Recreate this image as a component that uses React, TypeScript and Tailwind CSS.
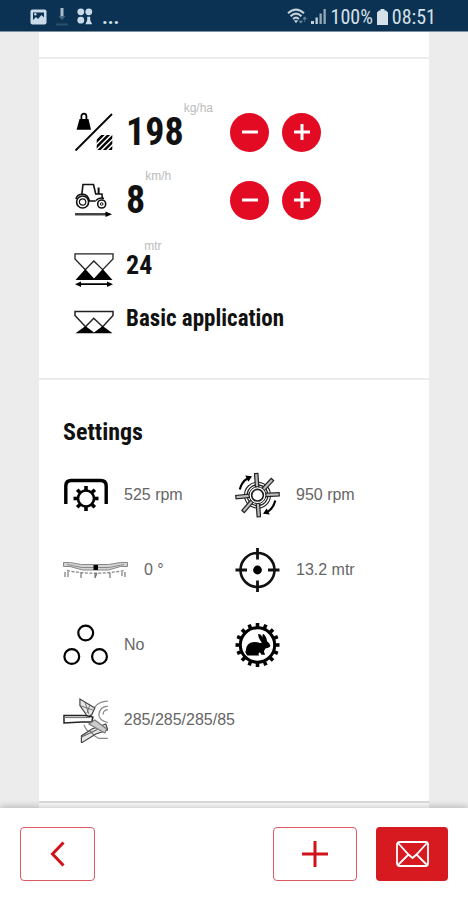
import type { ReactNode } from "react";

const GEAR_TEETH = [0, 45, 90, 135, 180, 225, 270, 315];
const WHEEL_TEETH = Array.from({ length: 16 }, (_, i) => i * 22.5);
const DISC_BLADES = [-4, 43, 87, 176, 221, 264];

const PictureIcon = () => (
  <svg className="h-4 w-[17px]" viewBox="0 0 17 16" aria-hidden="true">
    <rect x="0.5" y="0.5" width="16" height="15" rx="2" fill="#c9dbe8" />
    <path d="M3 3.5h11v5l-2.5-2.5-3.5 4-2-2-3 3z" fill="#0b3252" />
    <circle cx="5.3" cy="5.2" r="1.2" fill="#c9dbe8" />
  </svg>
);

const DownloadIcon = () => (
  <svg className="h-[18px] w-3" viewBox="0 0 12 18" aria-hidden="true">
    <path d="M4.5 0h3v8h-3z" fill="#a9bccb" />
    <path d="M2.5 8h7L6 12z" fill="#496a82" />
    <path d="M0 16.5h12" stroke="#2b4f6b" strokeWidth="2" />
  </svg>
);

const AppsIcon = () => (
  <svg className="h-[17px] w-4" viewBox="0 0 16 17" aria-hidden="true">
    <g fill="#c9dbe8">
      <circle cx="3.8" cy="3.8" r="3.4" />
      <circle cx="11.8" cy="3.8" r="3.4" />
      <circle cx="3.8" cy="12.2" r="3.4" />
      <path d="M10.2 8.8h3v3.4l2 4H8.4l1.8-4z" />
    </g>
  </svg>
);

const WifiIcon = () => (
  <svg className="h-[17px] w-5" viewBox="0 0 20 17" aria-hidden="true">
    <g fill="none" stroke="#c3d0da" strokeWidth="2.1">
      <path d="M1 5.2Q9 -2 17 5.2" />
      <path d="M3.5 8.2Q9 3.2 14.5 8.2" />
      <path d="M6 11Q9 8.3 12 11" />
    </g>
    <path d="M6.8 12.2h4.4L9 15.2z" fill="#c3d0da" />
    <path d="M12 13l1.8 2.2 1.8-2.2zM16 11l1.7-2.2L19.4 11zM17.7 10v4" fill="#5e8799" stroke="#5e8799" strokeWidth="0.7" />
  </svg>
);

const SignalIcon = () => (
  <svg className="h-[17px] w-4" viewBox="0 0 16 17" aria-hidden="true">
    <g fill="#c3d0da">
      <path d="M0 13h3v3H0z" />
      <path d="M4.5 9.5h2.3V16H4.5z" />
      <path d="M8.5 5.5h2.3V16H8.5z" opacity="0.75" />
      <path d="M12.5 1h2.3v15h-2.3z" opacity="0.75" />
    </g>
  </svg>
);

const BatteryIcon = () => (
  <svg className="h-4 w-[11px]" viewBox="0 0 11 16" aria-hidden="true">
    <path d="M3.5 0h4v1.5H9l2 2V16H0V3.5l2-2h1.5z" fill="#d5e0e8" />
  </svg>
);

const RateIcon = () => (
  <svg className="h-[42px] w-10" viewBox="0 0 40 42" aria-hidden="true">
    <path d="M5.5 8h9L17 18.8H2.6z" />
    <path d="M7.4 9V5.2a2.5 2.5 0 0 1 5 0V9" fill="none" stroke="#000" strokeWidth="1.8" />
    <path d="M1.5 39.5L38 3" stroke="#000" strokeWidth="1.8" />
    <clipPath id="hatch">
      <path d="M22.7 24h15.6v15H22.7z" />
    </clipPath>
    <path
      d="M21 32l10-10M21 37.5L37 21.5M21 43l19-19M26.5 43L42 27.5M32 43l10-10"
      stroke="#000"
      strokeWidth="2.4"
      clipPath="url(#hatch)"
    />
  </svg>
);

const TractorIcon = () => (
  <svg className="h-[34px] w-10" viewBox="0 0 40 34" aria-hidden="true">
    <g fill="none" stroke="#111" strokeWidth="1.6">
      <path d="M7.8 11.5L9 1.5h10.5l2.2 9.5h6.2l.6 5" />
      <path d="M24.6 4.5V11" strokeWidth="2" />
      <path d="M2 16q1-5 7-4.8 5 .3 6.4 6.8h6.4" />
      <circle cx="8.6" cy="19" r="6" />
      <circle cx="8.6" cy="19" r="3.2" strokeWidth="1.2" />
      <circle cx="27.7" cy="21" r="4" />
      <circle cx="27.7" cy="21" r="1.3" strokeWidth="1" />
      <path d="M22 17.5q3-3.5 8-2" />
    </g>
    <path d="M1 31.2h33" stroke="#444" strokeWidth="2.4" />
    <path d="M31.5 28.4l6.5 2.8-6.5 2.8z" />
  </svg>
);

const WorkingWidthIcon = () => (
  <svg className="h-[46px] w-10" viewBox="0 -10 40 46" aria-hidden="true">
    <path
      d="M1 7V1.8h38V7L28.7 17.7 19.8 9l-8.5 8.7z"
      fill="none"
      stroke="#222"
      strokeWidth="1.3"
    />
    <path d="M1.5 28l9.8-11L20 26.5 28.7 17 38.5 28z" />
    <path d="M3 32.2h34" stroke="#000" strokeWidth="1.8" />
    <path d="M1 32.2l6-2.8V35zM39 32.2l-6-2.8V35z" />
  </svg>
);

const ApplicationIcon = () => (
  <svg className="h-[30px] w-10" viewBox="0 0 40 30" aria-hidden="true">
    <path
      d="M1 11.5V7.5h38v4L28.7 22.7l-9-8.5-8.2 8.5z"
      fill="none"
      stroke="#222"
      strokeWidth="1.5"
    />
    <path d="M1.5 29.3l10-7.3 8.5 6.4 8.7-6.4 9.8 7.3z" />
  </svg>
);

const PtoIcon = () => (
  <svg className="h-9 w-[45px]" viewBox="0 0 45 36" aria-hidden="true">
    <path d="M2.8 27V9q0-5.5 5.5-5.5h29.4q5.5 0 5.5 5.5v18" fill="none" stroke="#000" strokeWidth="3.4" />
    <circle cx="23" cy="21.5" r="8" fill="none" stroke="#000" strokeWidth="2.6" />
    {GEAR_TEETH.map((angle) => (
      <path key={angle} d="M21.2 9h3.6v4.5h-3.6z" transform={`rotate(${angle} 23 21.5)`} />
    ))}
  </svg>
);

const DiscIcon = () => (
  <svg className="h-[46px] w-[45px]" viewBox="0 0 45 46" aria-hidden="true">
    <g fill="none" stroke="#222">
      <circle cx="22.5" cy="23.2" r="13" strokeWidth="1.1" />
      <circle cx="22.5" cy="23.2" r="10.4" strokeWidth="1.2" />
      {DISC_BLADES.map((angle) => (
        <path
          key={angle}
          d="M21 15V1.5h3.4V15z"
          fill="#bbb"
          strokeWidth="1.2"
          transform={`rotate(${angle} 22.5 23.2)`}
        />
      ))}
      <circle cx="22.5" cy="23.2" r="8.4" fill="#fff" strokeWidth="1" />
      <circle cx="22.5" cy="23.2" r="5.8" strokeWidth="1.7" />
      <path d="M4.8 17.5Q6.5 10 12.5 6.5M40.3 28.5Q38.5 36 33 39.5" stroke="#000" strokeWidth="2.2" />
    </g>
    <path d="M10.2 3.6l6.8.6-3.6 5.6zM34.8 42.6l-6.8-.9 3.7-5.2z" />
  </svg>
);

const BoomIcon = () => (
  <svg className="h-[18px] w-[65px]" viewBox="0 0 65 18" aria-hidden="true">
    <path
      d="M.5 1.5h6l12 2h27l12-2h7v4h-7l-12 3.5h-26L7 5.5H.5z"
      fill="#d4d4d4"
      stroke="#888"
      strokeWidth="1"
    />
    <path d="M4 3.5l15 3h27l15-3" fill="none" stroke="#777" strokeWidth="0.8" />
    <path d="M4 9.5Q32 15 61 9.5" fill="none" stroke="#888" strokeWidth="1.3" strokeDasharray="3 1.5" />
    <path d="M2 11v5M5 11v5M18 12v5M32 12v5M34 12l-2 5M47 12v5M59 11v4M62 11v5" stroke="#777" strokeWidth="1.2" />
    <path d="M30.5 4H35v5h-4.5z" />
  </svg>
);

const TargetIcon = () => (
  <svg className="h-[46px] w-[45px]" viewBox="0 0 45 46" aria-hidden="true">
    <g fill="none" stroke="#111">
      <circle cx="22.5" cy="23" r="17" strokeWidth="2.6" />
      <path d="M22.5 1v11.5M22.5 33.5V45M.5 23H12M33 23h11.5" strokeWidth="2.8" />
    </g>
    <circle cx="22.5" cy="23" r="4.4" />
  </svg>
);

const CirclesIcon = () => (
  <svg className="h-[42px] w-[45px]" viewBox="0 0 45 42" aria-hidden="true">
    <g fill="none" stroke="#000" strokeWidth="2.2">
      <circle cx="22.7" cy="9" r="7.4" />
      <circle cx="8.8" cy="32.5" r="7.4" />
      <circle cx="36.5" cy="32.5" r="7.4" />
    </g>
  </svg>
);

const FastGearIcon = () => (
  <svg className="h-[46px] w-[45px]" viewBox="0 0 45 46" aria-hidden="true">
    <circle cx="22.5" cy="23" r="17.2" fill="none" stroke="#000" strokeWidth="3" />
    {WHEEL_TEETH.map((angle) => (
      <path key={angle} d="M20.7 1h3.6v4.5h-3.6z" transform={`rotate(${angle} 22.5 23)`} />
    ))}
    <path d="M11 31.5q-1.2-1.5 0-3.5 0-5 4.5-7.2 4.5-1.8 9.5.2l2-.5q-4-4.500-3.800-8.500 2.600-.4 4.300 3.200-.2-2.400.5-3.500 3.500 2.300 4 7.500 3.300 2 3.400 4.600-.6 2.400-5 2.600l-1.600 3 1.400 3.300h-3.600l-1.800-2.500-1.500 1.800 1 1.500h-12z" />
  </svg>
);

const VaneIcon = () => (
  <svg className="h-[46px] w-[45px]" viewBox="0 0 45 46" aria-hidden="true">
    <g fill="#e6e6e6" stroke="#444" strokeWidth="1.2">
      <path d="M45 4q-9 0-13.5 6.5Q27 17 28.5 24M21 28q2 5 6 8l9 5.5h9" fill="none" stroke="#888" />
      <path d="M17 2v6.5L25 20l4-2.5 3-6.5z" />
      <path d="M17 8.5L30 13M22 5l4 12M27 8l-3 8" fill="none" stroke="#666" strokeWidth="0.9" />
      <path d="M18.5 39v7L33 37l12-4-2-6-14 5z" />
      <path d="M18.5 40l16-7.5M27 34l4 4" fill="none" stroke="#666" />
      <path d="M1 18.5h21l8 1.5-1 5H19L1 26z" fill="#fff" stroke="#222" strokeWidth="1.5" />
      <path d="M1 20.5h26" fill="none" stroke="#777" />
      <path d="M26 27l6-4 12 9-2 4z" fill="#ccc" stroke="#777" />
      <path d="M45 9q-8 .5-9 8.500 0 6 9 8M45 12.500q-5 .5-4.500 5" fill="none" stroke="#888" />
    </g>
  </svg>
);

const RoundButton = ({ label, plus }: { label: string; plus?: boolean }) => (
  <button
    type="button"
    aria-label={label}
    className="flex size-[39px] items-center justify-center rounded-full bg-[#e30b23]"
  >
    <svg className="size-4" viewBox="0 0 16 16" aria-hidden="true">
      <path d={plus ? "M0 8h16M8 0v16" : "M0 8h16"} stroke="#fff" strokeWidth="3" />
    </svg>
  </button>
);

const InputRow = ({
  icon,
  value,
  unit,
  name,
}: {
  icon: ReactNode;
  value: string;
  unit: string;
  name: string;
}) => (
  <div className="flex h-[68px] items-center">
    {icon}
    <div className="ml-3 flex h-full w-[104px] items-center">
      <span className="text-[38px] leading-10">{value}</span>
      <span className="self-start font-[Liberation_Sans] text-xs leading-5 font-normal text-[#bbb]">
        {unit}
      </span>
    </div>
    <div className="flex gap-[13px]">
      <RoundButton label={`Decrease ${name}`} />
      <RoundButton label={`Increase ${name}`} plus />
    </div>
  </div>
);

const Setting = ({ icon, children }: { icon: ReactNode; children?: ReactNode }) => (
  <li className="flex h-[75px] items-center gap-4">
    {icon}
    <span>{children}</span>
  </li>
);

const StatusBar = () => (
  <header className="flex h-8 items-center justify-between border-b border-[#7d90a0] bg-[#0b3252] pt-0.5 pr-8 pl-[30px] font-['Roboto_Condensed',Roboto,sans-serif] text-xl text-[#d5e0e8]">
    <div className="flex items-center gap-[9px]">
      <PictureIcon />
      <DownloadIcon />
      <AppsIcon />
      <span className="font-bold">...</span>
    </div>
    <div className="flex items-center gap-1">
      <WifiIcon />
      <SignalIcon />
      <span>100%</span>
      <BatteryIcon />
      <span>08:51</span>
    </div>
  </header>
);

const BottomBar = () => (
  <footer className="sticky bottom-0 flex h-[92px] items-center bg-white px-5 shadow-[0_-1px_7px_rgba(0,0,0,0.25)]">
    <button
      type="button"
      aria-label="Back"
      className="flex h-[54px] w-[75px] items-center justify-center rounded-sm border border-[#dc5a62]"
    >
      <svg className="h-[26px] w-4" viewBox="0 0 16 26" aria-hidden="true">
        <path d="M13.5 1.5L2.5 13l11 11.5" fill="none" stroke="#d3111b" strokeWidth="3" />
      </svg>
    </button>
    <button
      type="button"
      aria-label="Add"
      className="ml-auto flex h-[54px] w-[84px] items-center justify-center rounded-sm border border-[#dc5a62]"
    >
      <svg className="size-[26px]" viewBox="0 0 26 26" aria-hidden="true">
        <path d="M0 13h26M13 0v26" stroke="#d3111b" strokeWidth="3" />
      </svg>
    </button>
    <button
      type="button"
      aria-label="Send by mail"
      className="ml-[19px] flex h-[54px] w-[72px] items-center justify-center rounded-sm bg-[#d71920]"
    >
      <svg className="h-[26px] w-[33px]" viewBox="0 0 33 26" aria-hidden="true">
        <g fill="none" stroke="#fff" strokeWidth="1.8">
          <rect x="1" y="1" width="31" height="24" rx="2.5" />
          <path d="M2 2l10.5 11.5 4 3.5 4-3.5L31 2M2 24l10.5-10.5M31 24L20.5 13.5" />
        </g>
      </svg>
    </button>
  </footer>
);

export default function App() {
  return (
    <div className="flex min-h-screen flex-col bg-[#ececec] text-black">
      <StatusBar />
      <main className="mx-[39px] grow bg-white font-['Liberation_Sans_Narrow','Roboto_Condensed',sans-serif] font-bold text-[#111]">
        <div className="h-[27px] border-b-2 border-[#ececec]" />
        <section className="border-b-2 border-[#ececec] pt-[39px] pb-9 pl-[35px]">
          <InputRow icon={<RateIcon />} value="198" unit="kg/ha" name="application rate" />
          <InputRow icon={<TractorIcon />} value="8" unit="km/h" name="speed" />
          <div className="flex h-[62px] items-center">
            <WorkingWidthIcon />
            <span className="ml-3 text-[26px] leading-6">24</span>
            <span className="-ml-2 self-start pt-1.5 font-[Liberation_Sans] text-xs leading-3 font-normal text-[#bbb]">
              mtr
            </span>
          </div>
          <div className="flex h-[46px] items-center">
            <ApplicationIcon />
            <span className="ml-3 text-[23px] leading-8">Basic application</span>
          </div>
        </section>
        <section className="border-b-2 border-[#dcdcdc] pt-9 pb-11 pl-6">
          <h2 className="text-2xl">Settings</h2>
          <ul className="mt-[9px] grid grid-cols-[172px_1fr] font-[Liberation_Sans] text-base font-normal text-[#666]">
            <Setting icon={<PtoIcon />}>525 rpm</Setting>
            <Setting icon={<DiscIcon />}>950 rpm</Setting>
            <Setting icon={<BoomIcon />}>0 °</Setting>
            <Setting icon={<TargetIcon />}>13.2 mtr</Setting>
            <Setting icon={<CirclesIcon />}>No</Setting>
            <Setting icon={<FastGearIcon />} />
            <Setting icon={<VaneIcon />}>285/285/285/85</Setting>
          </ul>
        </section>
      </main>
      <BottomBar />
    </div>
  );
}
